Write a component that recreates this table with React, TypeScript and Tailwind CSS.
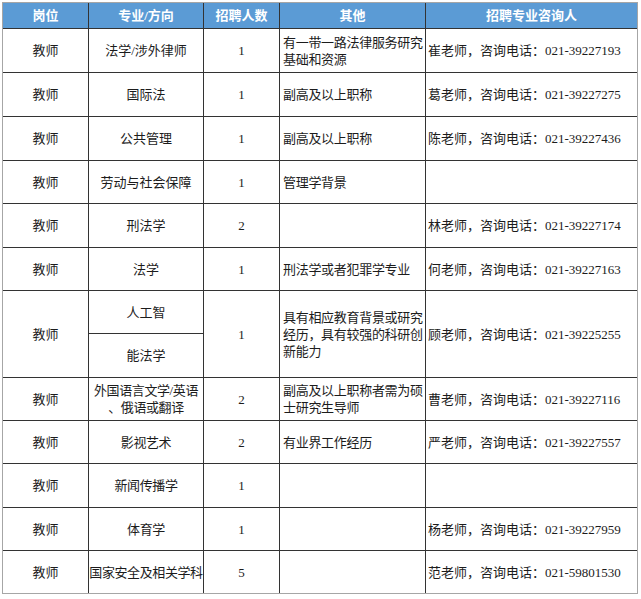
const rows = [
  { spec: "法学/涉外律师", num: "1", other: ["有一带一路法律服务研究", "基础和资源"], contact: "崔老师，咨询电话：021-39227193" },
  { spec: "国际法", num: "1", other: ["副高及以上职称"], contact: "葛老师，咨询电话：021-39227275" },
  { spec: "公共管理", num: "1", other: ["副高及以上职称"], contact: "陈老师，咨询电话：021-39227436" },
  { spec: "劳动与社会保障", num: "1", other: ["管理学背景"], contact: "" },
  { spec: "刑法学", num: "2", other: [], contact: "林老师，咨询电话：021-39227174" },
  { spec: "法学", num: "1", other: ["刑法学或者犯罪学专业"], contact: "何老师，咨询电话：021-39227163" },
];

const rowsAfter = [
  { spec: ["外国语言文学/英语", "、俄语或翻译"], num: "2", other: ["副高及以上职称者需为硕", "士研究生导师"], contact: "曹老师，咨询电话：021-39227116" },
  { spec: ["影视艺术"], num: "2", other: ["有业界工作经历"], contact: "严老师，咨询电话：021-39227557" },
  { spec: ["新闻传播学"], num: "1", other: [], contact: "" },
  { spec: ["体育学"], num: "1", other: [], contact: "杨老师，咨询电话：021-39227959" },
  { spec: ["国家安全及相关学科"], num: "5", other: [], contact: "范老师，咨询电话：021-59801530" },
];

const center = "bg-white flex items-center justify-center text-center whitespace-nowrap";
const left = "bg-white flex flex-col justify-center whitespace-nowrap";

const App = () => {
  return (
    <div className="w-[641px] h-[599px] bg-white pt-[2px] pl-[2px]">
      <div
        className="w-[636px] border border-[#a6a6a6] text-[13px] leading-[17px] text-[#1c1c1c]"
        style={{ fontFamily: '"Liberation Serif", "Noto Sans CJK SC", serif' }}
      >
        <div className="grid grid-cols-[85px_114px_75px_145px_1fr] grid-rows-[25px_43px_43px_43px_42px_43px_42px_42px_43px_42px_42px_43px_42px_42px] gap-px bg-[#333333]">
          {/* Header */}
          {["岗位", "专业/方向", "招聘人数", "其他", "招聘专业咨询人"].map((h) => (
            <div key={h} className="bg-[#5b9bd5] flex items-center justify-center text-white font-bold">
              {h}
            </div>
          ))}

          {rows.map((r) => (
            <div key={r.spec} className="contents">
              <div className={center}>教师</div>
              <div className={center}>{r.spec}</div>
              <div className={center}>{r.num}</div>
              <div className={`${left} pl-[3px] tracking-[-0.3px]`}>
                {r.other.map((o) => (
                  <span key={o}>{o}</span>
                ))}
              </div>
              <div className={`${left} pl-[2px]`}>{r.contact}</div>
            </div>
          ))}

          {/* Split row */}
          <div className={`${center} row-span-2`}>教师</div>
          <div className={center}>人工智</div>
          <div className={`${center} row-span-2`}>1</div>
          <div className={`${left} row-span-2 pl-[3px] tracking-[-0.3px]`}>
            <span>具有相应教育背景或研究</span>
            <span>经历，具有较强的科研创</span>
            <span>新能力</span>
          </div>
          <div className={`${left} row-span-2 pl-[2px]`}>顾老师，咨询电话：021-39225255</div>
          <div className={center}>能法学</div>

          {rowsAfter.map((r) => (
            <div key={r.spec[0]} className="contents">
              <div className={center}>教师</div>
              <div className={`${center} flex-col tracking-[-0.4px]`}>
                {r.spec.map((s) => (
                  <span key={s}>{s}</span>
                ))}
              </div>
              <div className={center}>{r.num}</div>
              <div className={`${left} pl-[3px] tracking-[-0.3px]`}>
                {r.other.map((o) => (
                  <span key={o}>{o}</span>
                ))}
              </div>
              <div className={`${left} pl-[2px]`}>{r.contact}</div>
            </div>
          ))}
        </div>
      </div>
    </div>
  );
};

export default App;
